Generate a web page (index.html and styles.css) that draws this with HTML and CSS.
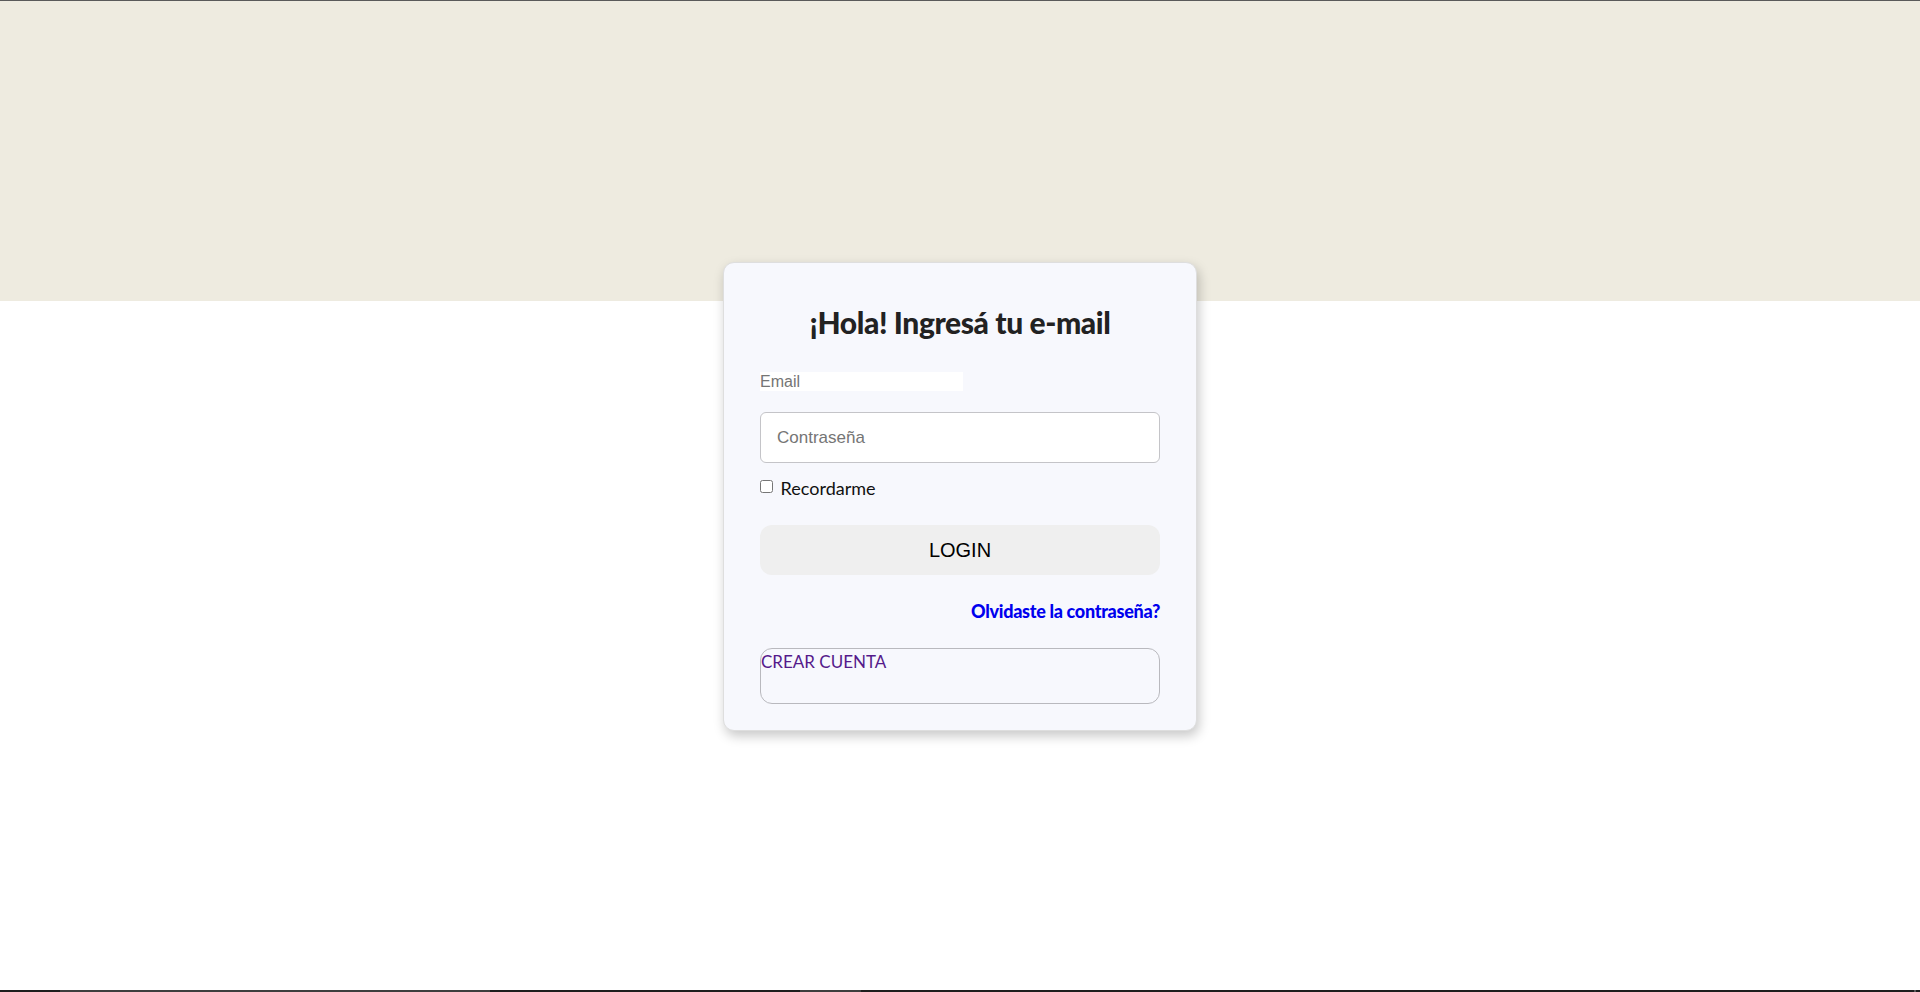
FILE: index.html
```html
<!DOCTYPE html>
<html lang="es">
<head>
<meta charset="utf-8">
<title>Login</title>
<link rel="stylesheet" href="styles.css">
</head>
<body>
<div class="page">
  <div class="hero"></div>
  <main class="main">
    <form class="card">
      <h1 class="title">¡Hola! Ingresá tu e-mail</h1>
      <input class="email" type="text" placeholder="Email">
      <input class="password" type="password" placeholder="Contraseña">
      <label class="remember"><input class="check" type="checkbox"> Recordarme</label>
      <button class="login" type="button">LOGIN</button>
      <div class="forgot-row"><a class="forgot" href="#">Olvidaste la contraseña?</a></div>
      <a class="create" href="#">CREAR CUENTA</a>
    </form>
  </main>
  <div class="taskbar">
    <span class="tb-gap1"></span>
    <span class="tb-seg1"></span>
    <span class="tb-gap2"></span>
    <span class="tb-seg2"></span>
    <span class="tb-gap3"></span>
    <span class="tb-seg3"></span>
  </div>
</div>
</body>
</html>
```

FILE: styles.css
```css
html, body {
  margin: 0;
  padding: 0;
  height: 100%;
  background: #ffffff;
}
body {
  font-family: Lato, "Open Sans", "Liberation Sans", sans-serif;
  overflow: hidden;
}
.page {
  height: 992px;
  display: flex;
  flex-direction: column;
  border-top: 1px solid #5a5a5a;
  box-sizing: border-box;
}
.hero {
  height: 300px;
  flex: none;
  background: #eeebe0;
}
.main {
  flex: 1;
  display: flex;
  justify-content: center;
  align-items: flex-start;
  margin-top: -39px;
}
.card {
  width: 474px;
  box-sizing: border-box;
  background: #f7f8fd;
  border: 1px solid #dedede;
  border-radius: 11px;
  box-shadow: 2px 5px 12px rgba(0, 0, 0, 0.22);
  padding: 0 36px 26px;
  display: flex;
  flex-direction: column;
  align-items: flex-start;
}
.title {
  align-self: stretch;
  text-align: center;
  margin: 42px 0 0;
  font-size: 30px;
  font-weight: 900;
  letter-spacing: -0.4px;
  line-height: 34px;
  color: #222222;
}
.email {
  margin-top: 33px;
  width: 203px;
  height: 19px;
  padding: 0;
  border: none;
  background: #ffffff;
  font-family: "Liberation Sans", Arial, sans-serif;
  font-size: 16px;
  outline: none;
}
.email::placeholder, .password::placeholder {
  color: #757575;
}
.password {
  margin-top: 21px;
  width: 400px;
  height: 51px;
  box-sizing: border-box;
  padding: 0 16px;
  border: 1px solid #c4c4c8;
  border-radius: 6px;
  background: #ffffff;
  font-family: "Liberation Sans", Arial, sans-serif;
  font-size: 17px;
}
.remember {
  margin-top: 15px;
  display: flex;
  align-items: center;
  font-size: 18px;
  color: #111111;
  line-height: 20px;
  white-space: pre;
}
.check {
  margin: 0 3px 0 0;
  width: 13px;
  height: 13px;
  position: relative;
  top: -2px;
}
.login {
  margin-top: 27px;
  width: 400px;
  height: 50px;
  border: none;
  border-radius: 12px;
  background: #efefef;
  font-family: "Liberation Sans", Arial, sans-serif;
  font-size: 20px;
  color: #000000;
  padding: 0;
}
.forgot-row {
  align-self: stretch;
  display: flex;
  justify-content: flex-end;
  margin-top: 26px;
  line-height: 20px;
}
.forgot {
  color: #0000ee;
  font-weight: 900;
  font-size: 18px;
  letter-spacing: -0.3px;
  text-decoration: none;
}
.create {
  margin-top: 27px;
  width: 400px;
  height: 56px;
  box-sizing: border-box;
  border: 1px solid #b9b9be;
  border-radius: 12px;
  color: #551a8b;
  font-size: 17px;
  line-height: 22px;
  text-decoration: none;
  padding: 2px 0 0;
}
.taskbar {
  height: 2px;
  flex: none;
  display: flex;
  background: #1e1e1e;
}
.tb-gap1 { width: 60px; }
.tb-seg1 { width: 430px; background: #3e3e3e; }
.tb-gap2 { width: 310px; }
.tb-seg2 { width: 61px; background: #3e3e3e; }
.tb-gap3 { width: 1053px; }
.tb-seg3 { width: 2px; background: #5a5a5a; }
```
